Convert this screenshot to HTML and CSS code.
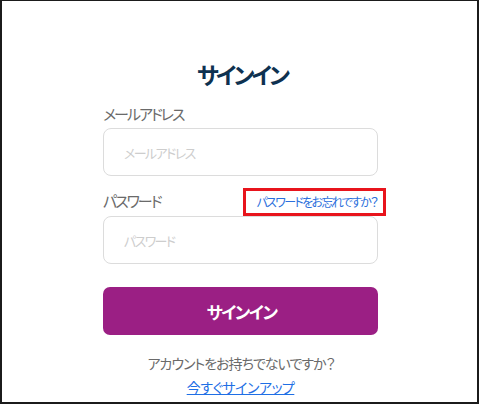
FILE: index.html
```html
<!DOCTYPE html>
<html lang="ja">
<head>
<meta charset="utf-8">
<title>サインイン</title>
<link rel="stylesheet" href="styles.css">
</head>
<body>
<div class="frame">
  <main class="card">
    <h1 class="title">サインイン</h1>
    <label class="label" for="email">メールアドレス</label>
    <input class="field" id="email" type="text" placeholder="メールアドレス">
    <div class="pw-row">
      <label class="label" for="pw">パスワード</label>
      <a class="forgot" href="#">パスワードをお忘れですか？</a>
    </div>
    <input class="field" id="pw" type="password" placeholder="パスワード">
    <button class="submit" type="button">サインイン</button>
    <p class="note">アカウントをお持ちでないですか？</p>
    <a class="signup" href="#">今すぐサインアップ</a>
  </main>
</div>
</body>
</html>
```
FILE: styles.css
```css
* { box-sizing: border-box; }
html, body { margin: 0; padding: 0; background: #fff; }
body {
  font-family: "Noto Sans CJK JP", "Noto Sans", sans-serif;
  font-feature-settings: "palt" 1;
}
.frame {
  width: 479px;
  height: 404px;
  border-style: solid;
  border-color: #1b1b1b;
  border-width: 1px 2px 2px 2px;
  overflow: hidden;
}
.card {
  width: 275px;
  margin: 0 0 0 101px;
  padding-top: 58px;
  display: flex;
  flex-direction: column;
}
.title {
  margin: 0 0 1px;
  padding-left: 3px;
  text-align: center;
  font-size: 23px;
  line-height: 30px;
  font-weight: 700;
  letter-spacing: -3px;
  color: #0e3150;
}
.label {
  display: block;
  margin-top: 14px;
  font-size: 15px;
  line-height: 20px;
  letter-spacing: -2px;
  color: #6a6a6a;
}
.field {
  display: block;
  width: 275px;
  height: 48px;
  margin-top: 4px;
  padding: 0 20px;
  border: 1px solid #dcdcdc;
  border-radius: 8px;
  font-family: inherit;
  font-feature-settings: "palt" 1;
  font-size: 13px;
  letter-spacing: -1.6px;
  color: #333;
  background: #fff;
  outline: none;
}
.field::placeholder { color: #cdcdcd; }
.pw-row {
  display: flex;
  justify-content: space-between;
  align-items: center;
  height: 28px;
  margin-top: 12px;
}
.pw-row .label { margin-top: 0; margin-bottom: 2px; }
.forgot {
  margin-right: -8px;
  height: 28px;
  padding: 0 6px 0 11px;
  border: 3px solid #e8141c;
  font-size: 12px;
  line-height: 22px;
  letter-spacing: -1.7px;
  color: #2b6fdc;
  text-decoration: none;
}
.pw-row + .field { margin-top: 0; }
.submit {
  margin-top: 23px;
  height: 48px;
  padding: 0 0 0 2px;
  border: 0;
  border-radius: 7px;
  background: #9b1f84;
  color: #fff;
  font-family: inherit;
  font-feature-settings: "palt" 1;
  font-size: 17px;
  font-weight: 700;
  letter-spacing: -1.6px;
}
.note {
  margin: 18px 0 0;
  padding-left: 1px;
  text-align: center;
  font-size: 14px;
  line-height: 20px;
  letter-spacing: -1px;
  color: #6a6a6a;
}
.signup {
  align-self: center;
  margin-top: 4px;
  font-size: 14px;
  line-height: 20px;
  letter-spacing: -0.5px;
  color: #1f6fe5;
  text-decoration: underline;
}
```
